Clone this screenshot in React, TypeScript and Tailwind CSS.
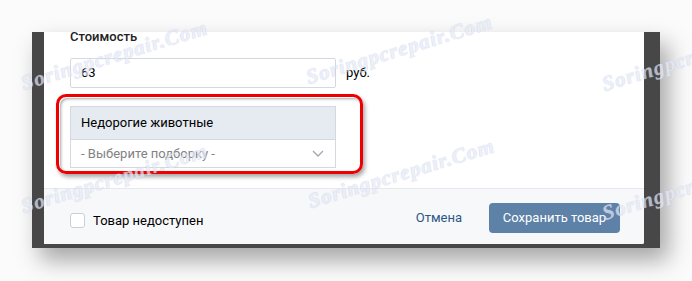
import React from "react";

const Watermark = ({ left, bottom }: { left: number; bottom: number }) => (
  <span
    className="pointer-events-none absolute origin-[0_100%] -rotate-[17deg] whitespace-nowrap text-[21px] font-bold italic leading-none tracking-[1px] text-[#e6eaf6] opacity-70 [font-family:'Liberation_Serif',serif] [text-shadow:0_0_1px_#a9b4da]"
    style={{ left, top: bottom - 19 }}
  >
    Soringpcrepair.Com
  </span>
);

export default function App() {
  return (
    <div className="relative h-[281px] w-[692px] overflow-hidden bg-[#fbfbfb] pl-[32px] pt-[32px] [font-family:Roboto,'Liberation_Sans',sans-serif]">
      <div className="flex h-[216px] w-[628px] bg-[#474747] pb-[4px] pl-[12px] pr-[16px] shadow-[8px_12px_22px_rgba(0,0,0,0.35)]">
        <div className="flex flex-1 flex-col overflow-hidden rounded-br-[2px] bg-white">
          <div className="flex flex-col px-[26px]">
            <div className="-mt-[3px] h-[16px] text-[13px] font-medium leading-[16px] text-[#222]">
              Стоимость
            </div>
            <div className="mt-[13px] flex items-center">
              <div className="flex h-[30px] w-[266px] items-center rounded-[2px] border border-[#d3d9de] bg-white pl-[10px] text-[13px] text-[#000]">
                63
              </div>
              <span className="ml-[10px] text-[13px] text-[#000]">руб.</span>
            </div>
            <div className="-ml-[14px] mt-[6px] h-[80px] w-[307px] rounded-[10px] border-[3px] border-[#ee0000] pl-[11px] pt-[9px] shadow-[2px_3px_4px_rgba(0,0,0,0.35),inset_1px_1px_0_#fff,inset_2px_2px_3px_rgba(0,0,0,0.35)]">
              <div className="flex w-[266px] flex-col border border-[#d3d9de] text-[13px]">
                <div className="flex h-[32px] items-center bg-[#e5ebf1] pl-[10px] text-[#000]">
                  Недорогие животные
                </div>
                <div className="flex h-[28px] items-center justify-between border-t border-[#d3d9de] bg-white pl-[10px] pr-[11px] text-[#828282]">
                  <span>- Выберите подборку -</span>
                  <svg width="12" height="7" viewBox="0 0 12 7" fill="none">
                    <path d="M1 1l5 5 5-5" stroke="#a0a6ad" strokeWidth="1.3" />
                  </svg>
                </div>
              </div>
            </div>
          </div>
          <div className="mt-[14px] flex flex-1 items-start border-t border-[#e7e8ec] bg-[#f7f8fa] pl-[26px] pr-[24px] pt-[14px]">
            <div className="mt-[8px] flex items-center">
              <div className="h-[15px] w-[15px] rounded-[3px] border border-[#c5d0db] bg-white" />
              <span className="ml-[8px] text-[13px] text-[#000]">Товар недоступен</span>
            </div>
            <div className="ml-auto flex items-center">
              <span className="text-[13px] text-[#2a5885]">Отмена</span>
              <div className="ml-[27px] flex h-[30px] w-[131px] items-center justify-center rounded-[4px] bg-[#5e81a8] text-[13px] text-white">
                Сохранить товар
              </div>
            </div>
          </div>
        </div>
      </div>
      <Watermark left={25} bottom={92} />
      <Watermark left={310} bottom={86} />
      <Watermark left={606} bottom={93} />
      <Watermark left={25} bottom={215} />
      <Watermark left={312} bottom={210} />
      <Watermark left={606} bottom={222} />
    </div>
  );
}
